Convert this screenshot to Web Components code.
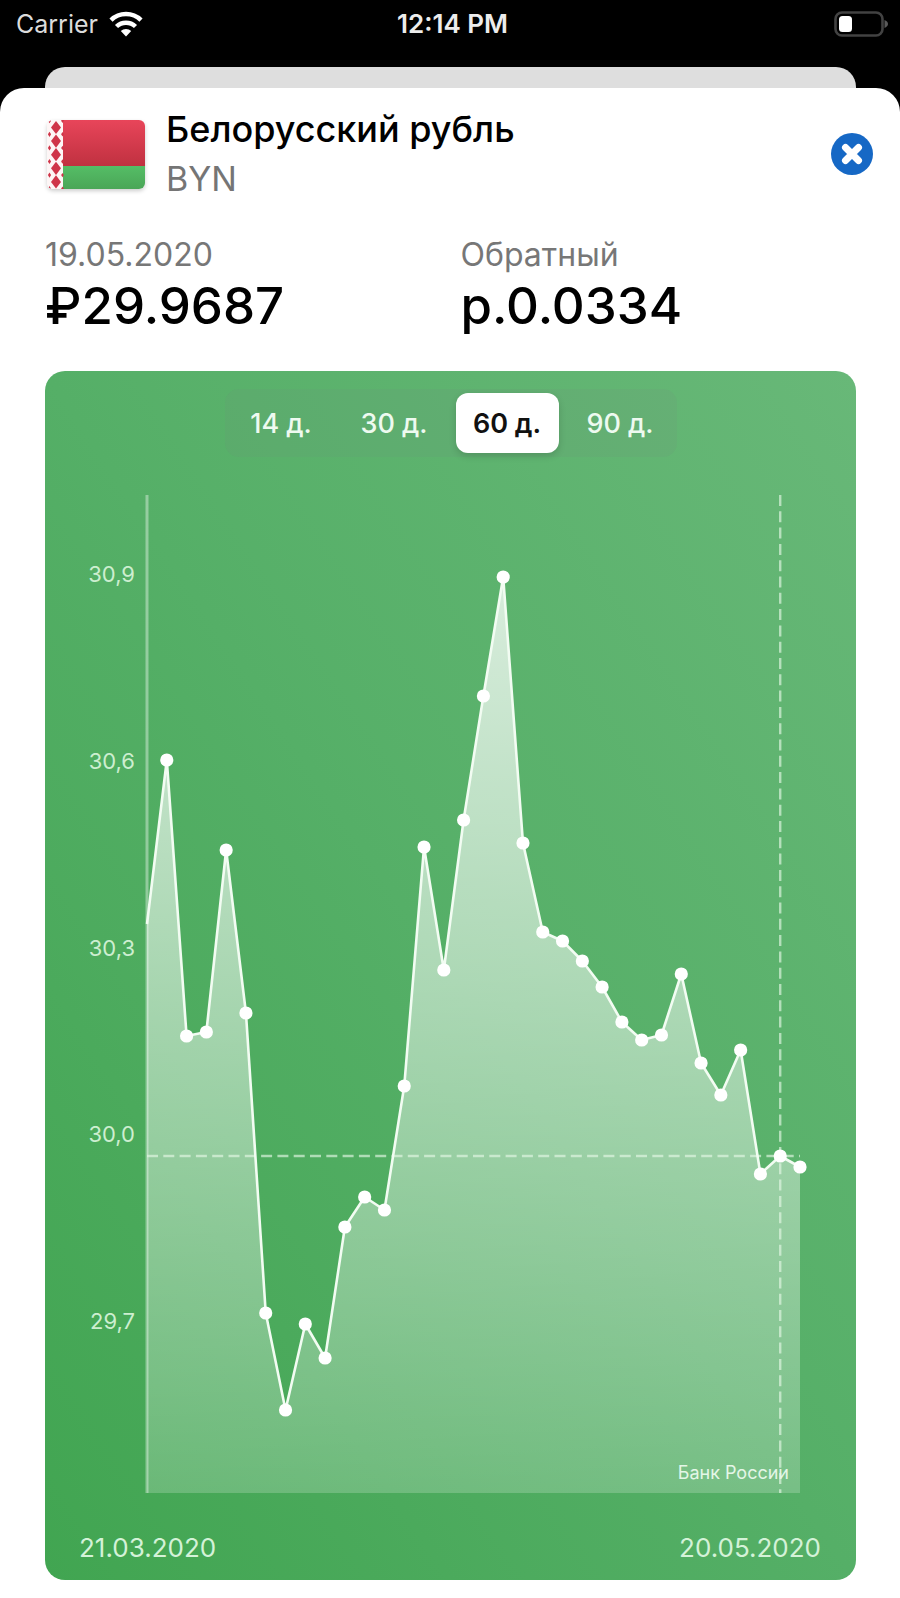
<!DOCTYPE html>
<html lang="ru">
<head>
<meta charset="utf-8">
<meta name="viewport" content="width=device-width, initial-scale=1">
<title>Белорусский рубль</title>
<style>
  html, body { margin: 0; height: 100%; background: #000; }
  body { font-family: Inter, "Liberation Sans", sans-serif; color: #000; }
</style>
</head>
<body>
<currency-app></currency-app>

<template id="t-app">
  <style>
    :host { display: flex; flex-direction: column; min-height: 100%; background: #000; }
    .back { height: 21px; margin: 0 44px 0 45px; background: #dedede; border-radius: 20px 20px 0 0; }
    main { flex: 1; background: #fff; border-radius: 24px 24px 0 0; padding: 16px 0; }
    .rates { display: grid; grid-template-columns: 1fr 1fr; gap: 20px; margin: 31px 44px 35px 45px; }
    rate-chart { margin: 0 44px 0 45px; }
  </style>
  <status-bar carrier="Carrier" time="12:14 PM"></status-bar>
  <div class="back"></div>
  <main>
    <currency-header>
      <flag-by slot="flag"></flag-by>
      <span slot="name">Белорусский рубль</span>
      <span slot="code">BYN</span>
    </currency-header>
    <div class="rates">
      <rate-value label="19.05.2020">₽29.9687</rate-value>
      <rate-value label="Обратный">р.0.0334</rate-value>
    </div>
    <rate-chart from="21.03.2020" to="20.05.2020">Банк России</rate-chart>
  </main>
</template>

<template id="t-status">
  <style>
    :host { display: grid; grid-template-columns: 1fr auto 1fr; align-items: center; height: 47px; padding: 0 11px 20px 16px; color: #fff; font-size: 25px; line-height: 32px; }
    .left { display: flex; align-items: center; gap: 11px; color: #dcdcdc; }
    .time { font-size: 26px; font-weight: 600; color: #ececec; }
    .battery { justify-self: end; }
    svg { display: block; }
  </style>
  <div class="left"><span class="carrier"></span>
    <svg width="34" height="26" viewBox="0 0 34 26" aria-hidden="true">
      <g fill="none" stroke="#fff" stroke-width="4.500">
        <path d="M2 9.200a21.500 21.500 0 0 1 30 0"/>
        <path d="M7.500 15.500a13.700 13.700 0 0 1 19 0"/>
      </g>
      <path d="M17 25.500L11.800 20a7.500 7.500 0 0 1 10.400 0z" fill="#fff"/>
    </svg>
  </div>
  <span class="time"></span>
  <svg class="battery" width="55" height="26" viewBox="0 0 55 26" role="img" aria-label="Заряд батареи">
    <rect x="1.500" y="1.500" width="47" height="23" rx="6.500" fill="none" stroke="#424242" stroke-width="2.600"/>
    <path d="M50.500 9v8c2-.8 3.500-2.200 3.500-4s-1.500-3.200-3.500-4z" fill="#5a5a5a"/>
    <rect x="5" y="5" width="13" height="16" rx="3.500" fill="#fff"/>
  </svg>
</template>

<template id="t-header">
  <style>
    :host { display: flex; align-items: center; padding: 0 27px 0 47px; }
    .names { flex: 1; margin-left: 21px; font-size: 34px; line-height: 50px; }
    h1 { margin: 0; font-size: 36px; font-weight: 500; }
    p { margin: 0; color: #757575; }
    button { width: 42px; height: 42px; padding: 0; border: 0; border-radius: 50%; background: #1668c5; cursor: pointer; }
    svg { display: block; }
  </style>
  <slot name="flag"></slot>
  <div class="names"><h1><slot name="name"></slot></h1><p><slot name="code"></slot></p></div>
  <button type="button" aria-label="Закрыть">
    <svg width="42" height="42" viewBox="0 0 42 42" aria-hidden="true"><path d="M14.500 14.500l13 13M27.500 14.500L14.500 27.500" stroke="#fff" stroke-width="7" stroke-linecap="round"/></svg>
  </button>
</template>

<template id="t-flag">
  <style>
    :host { display: block; }
    svg { display: block; border-radius: 6px; box-shadow: 0 2px 4px rgba(0,0,0,.2); }
  </style>
  <svg width="98" height="69" viewBox="0 0 98 69" role="img" aria-label="Флаг Беларуси">
    <defs>
      <linearGradient id="r" x2="0" y2="1"><stop stop-color="#e8455a"/><stop offset="1" stop-color="#c03140"/></linearGradient>
      <linearGradient id="g" x2="0" y2="1"><stop stop-color="#55bd66"/><stop offset="1" stop-color="#4aa657"/></linearGradient>
    </defs>
    <rect width="98" height="69" fill="#fdf6f6"/>
    <rect x="16" width="82" height="46" fill="url(#r)"/>
    <rect x="16" y="46" width="82" height="23" fill="url(#g)"/>
    <g fill="#cf3549" id="pattern"></g>
  </svg>
</template>

<template id="t-value">
  <style>
    :host { display: block; }
    .label { color: #777; font-size: 32px; line-height: 40px; }
    .value { font-size: 51px; line-height: 61px; font-weight: 500; }
  </style>
  <div class="label"></div>
  <div class="value"><slot></slot></div>
</template>

<template id="t-period">
  <style>
    :host { display: block; }
    fieldset { display: grid; grid-template-columns: repeat(4, 113px); margin: 0; padding: 0; border: 0; border-radius: 14px; background: rgba(118,118,128,.09); }
    label { display: block; padding: 4px 5px; cursor: pointer; }
    input { position: absolute; opacity: 0; margin: 0; }
    span { display: block; padding-top: 2px; border-radius: 12px; text-align: center; font-size: 27px; line-height: 58px; font-weight: 500; color: #eefaf0; }
    input:checked + span { background: #fff; color: #111; font-weight: 600; box-shadow: 0 3px 7px rgba(0,0,0,.15); }
    input:focus-visible + span { outline: 2px solid #fff; }
  </style>
  <fieldset aria-label="Период"></fieldset>
</template>

<template id="t-chart">
  <style>
    :host { display: block; padding: 18px 0 16px; border-radius: 20px; background: linear-gradient(to top right, #41a551, #55af67 50%, #68b878); }
    period-picker { display: flex; justify-content: center; margin-bottom: 38px; }
    .plot { display: grid; grid-template-columns: 90px 1fr; column-gap: 12px; margin-right: 56px; }
    ol { display: flex; flex-direction: column; justify-content: space-between; box-sizing: border-box; margin: 0; padding: 65px 0 158px; list-style: none; text-align: right; font-size: 22px; line-height: 28px; color: #cdeed0; }
    svg, .source { grid-column: 2; grid-row: 1; }
    svg { display: block; width: 100%; height: auto; overflow: visible; }
    .source { place-self: end; padding: 0 11px 8px 0; font-size: 18px; line-height: 24px; color: #e4f6e7; }
    .dates { display: flex; justify-content: space-between; margin-top: 39px; padding: 0 35px 0 34px; font-size: 26px; line-height: 32px; color: #d4f2d8; }
  </style>
  <period-picker></period-picker>
  <div class="plot">
    <ol><li>30,9</li><li>30,6</li><li>30,3</li><li>30,0</li><li>29,7</li></ol>
    <svg viewBox="0 0 653 998" role="img" aria-label="График курса">
      <defs><linearGradient id="fill" gradientUnits="userSpaceOnUse" x1="0" y1="82" x2="0" y2="998">
        <stop stop-color="#fff" stop-opacity=".76"/><stop offset="1" stop-color="#fff" stop-opacity=".2"/>
      </linearGradient></defs>
      <path class="area" fill="url(#fill)"/>
      <path d="M0 0V998" stroke="#fff" stroke-opacity=".38" stroke-width="3"/>
      <path class="guides" fill="none" stroke="#e3f7e5" stroke-opacity=".65" stroke-width="2.400"/>
      <path class="line" fill="none" stroke="#f2fcf2" stroke-width="2.600" stroke-linejoin="round"/>
      <g class="dots" fill="#fff"></g>
    </svg>
    <div class="source"><slot></slot></div>
  </div>
  <div class="dates"><span class="from"></span><span class="to"></span></div>
</template>

<script>
  class BaseElement extends HTMLElement {
    constructor(id) {
      super();
      this.attachShadow({ mode: "open" }).append(document.getElementById(id).content.cloneNode(true));
    }
    $(selector) { return this.shadowRoot.querySelector(selector); }
  }

  customElements.define("status-bar", class extends BaseElement {
    constructor() { super("t-status"); }
    connectedCallback() {
      this.$(".carrier").textContent = this.getAttribute("carrier");
      this.$(".time").textContent = this.getAttribute("time");
    }
  });

  customElements.define("currency-header", class extends BaseElement {
    constructor() { super("t-header"); }
  });

  customElements.define("flag-by", class extends BaseElement {
    constructor() {
      super("t-flag");
      let shapes = "";
      const diamond = (x, y, w, h) => `<path d="M${x} ${y - h}L${x + w} ${y}L${x} ${y + h}L${x - w} ${y}z"/>`;
      for (let i = 0; i < 5; i++) shapes += diamond(9, 7.5 + i * 13.6, 5, 6.6);
      for (let i = 0; i < 6; i++) shapes += diamond(2.5, .7 + i * 13.6, 1.6, 2.6) + diamond(15.5, .7 + i * 13.6, 1.4, 2.2);
      this.$("#pattern").innerHTML = shapes;
    }
  });

  customElements.define("rate-value", class extends BaseElement {
    constructor() { super("t-value"); }
    connectedCallback() { this.$(".label").textContent = this.getAttribute("label"); }
  });

  customElements.define("period-picker", class extends BaseElement {
    constructor() {
      super("t-period");
      this.$("fieldset").innerHTML = [14, 30, 60, 90].map(days =>
        `<label><input type="radio" name="period" value="${days}"${days === 60 ? " checked" : ""}><span>${days} д.</span></label>`).join("");
    }
  });

  /* Heights of the rate points, measured down from the top of the plot. */
  const POINTS = [429, 265, 541, 537, 355, 518, 818, 915, 829, 863, 732, 702, 715, 591, 352, 475, 325,
    201, 82, 348, 437, 446, 466, 492, 527, 545, 540, 479, 568, 600, 555, 679, 661, 672];
  const STEP = 653 / (POINTS.length - 1);
  const SELECTED = 32;

  customElements.define("rate-chart", class extends BaseElement {
    constructor() { super("t-chart"); }
    connectedCallback() {
      const line = "M" + POINTS.map((y, i) => `${i * STEP} ${y}`).join("L");
      this.$(".line").setAttribute("d", line);
      this.$(".area").setAttribute("d", line + "V998H0z");
      const x = SELECTED * STEP;
      const y = POINTS[SELECTED];
      const guides = this.$(".guides");
      guides.setAttribute("d", `M0 ${y}H653M${x} 0V998`);
      guides.setAttribute("stroke-dasharray", "11 5.300");
      this.$(".dots").innerHTML = POINTS.map((y, i) => i ? `<circle cx="${i * STEP}" cy="${y}" r="6.600"/>` : "").join("");
      this.$(".from").textContent = this.getAttribute("from");
      this.$(".to").textContent = this.getAttribute("to");
    }
  });

  customElements.define("currency-app", class extends BaseElement {
    constructor() { super("t-app"); }
  });
</script>
</body>
</html>
